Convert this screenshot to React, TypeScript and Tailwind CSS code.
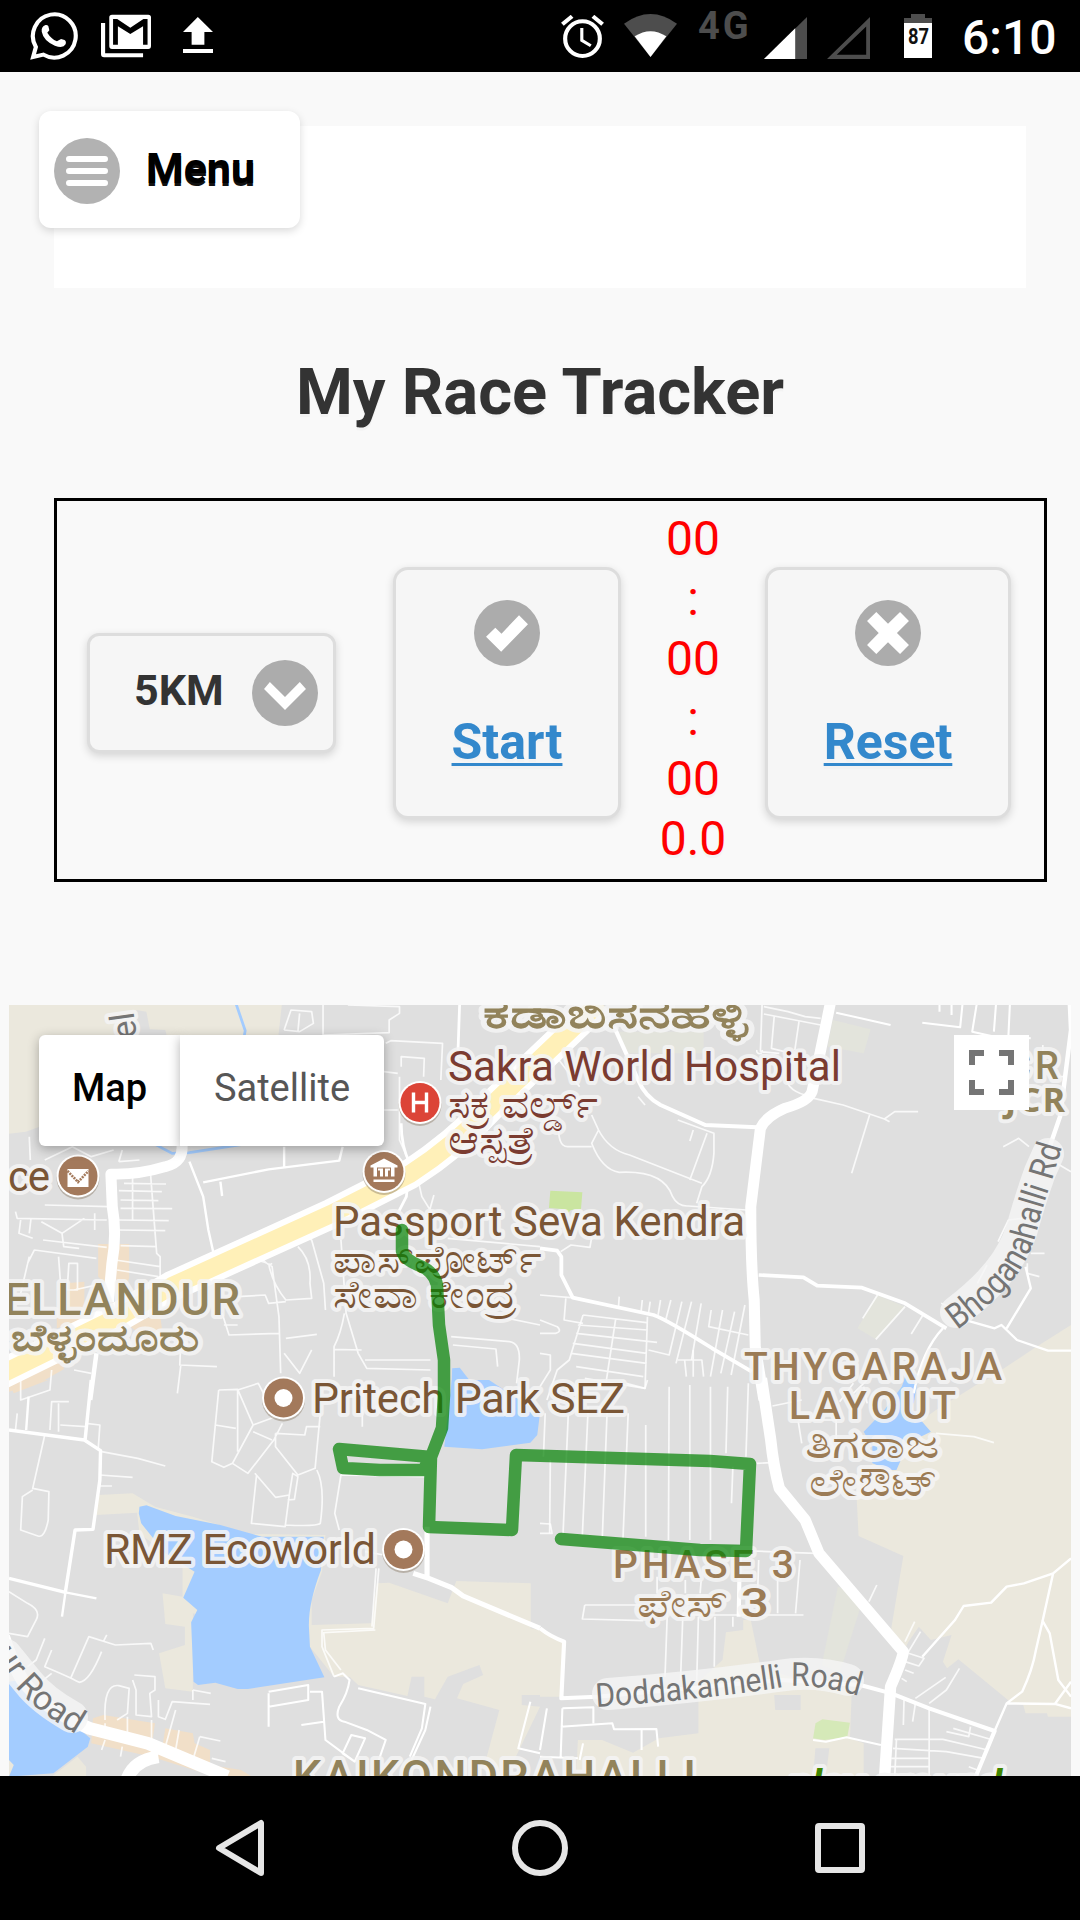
import React from "react";

const CHECK = "M35 110 L62 83 L80 101 L131 46 L157 73 L79 155 Z";
const CHEVRON = "M35 87 L52 66 L96 111 L139 66 L157 87 L96 150 Z";
const CROSS = "M35 63 L62 36 L96 71 L131 36 L157 63 L122 99 L157 135 L131 162 L96 127 L62 162 L35 135 L69 99 Z";

function RoundIcon({ d, fill = "#acacac" }: { d: string; fill?: string }) {
  return (
    <svg className="block h-[66px] w-[66px] shrink-0" viewBox="0 0 192 198" preserveAspectRatio="none">
      <ellipse cx="96" cy="99" rx="96" ry="99" fill={fill} />
      <path d={d} fill="#fff" />
    </svg>
  );
}

function StatusBar() {
  return (
    <header className="flex h-[72px] shrink-0 items-start bg-black">
      <svg className="mt-3 ml-[30px] h-12 w-[48px]" viewBox="88 36 139 144" preserveAspectRatio="none">
        <path d="M97 171 L105 141 A 62 65 0 1 1 127 164 Z" fill="none" stroke="#fff" strokeWidth="12" />
        <path
          d="M133 75 Q120 80 122 95 Q127 122 160 137 Q184 146 191 133 Q194 124 188 120 L178 117 L166 124 Q149 116 138 98 L144 91 L141 78 Q138 74 133 75 Z"
          fill="#fff"
        />
      </svg>
      <svg className="mt-[14px] ml-[23px] h-[44px] w-[50px]" viewBox="293 42 145 132" preserveAspectRatio="none">
        <path
          fillRule="evenodd"
          d="M325 44 H430 Q438 44 438 52 V138 Q438 147 430 147 H325 Q317 147 317 138 V52 Q317 44 325 44 Z M328 57 V134 H342 V79 L378 102 L415 79 V134 H428 V57 H416 L378 83 L340 57 Z"
          fill="#fff"
        />
        <path d="M293 69 H305 V160 H415 V172 H302 Q293 172 293 162 Z" fill="#fff" />
      </svg>
      <svg className="mt-[17px] ml-[32px] h-9 w-[30px]" viewBox="531 51 87 108" preserveAspectRatio="none">
        <path d="M574 51 L618 96 H593 V134 H556 V96 H531 Z M531 147 H618 V159 H531 Z" fill="#fff" />
      </svg>

      <svg className="mt-[15px] ml-[348px] h-[43px] w-[43px]" viewBox="62 45 124 129" preserveAspectRatio="none">
        <ellipse cx="124" cy="116" rx="50" ry="52" fill="none" stroke="#fff" strokeWidth="12" />
        <path d="M66 73 L94 49 M182 73 L154 49" stroke="#fff" strokeWidth="12" />
        <path d="M122 84 V121 L148 137" fill="none" stroke="#fff" strokeWidth="9" />
      </svg>
      <svg className="mt-[14px] ml-[20px] h-[43px] w-[53px]" viewBox="244 42 154 129" preserveAspectRatio="none">
        <path d="M321 171 L244 71 Q321 13 398 71 Z" fill="#4d4d4d" />
        <path d="M321 171 L275 109 Q321 78 367 109 Z" fill="#fff" />
      </svg>
      <div className="mt-[5px] ml-[21px] w-[50px] text-[38px] leading-[43px] font-bold tracking-[3px] text-[#4d4d4d]">4G</div>
      <svg className="mt-[17px] ml-[16px] h-[42px] w-[43px]" viewBox="648 50 124 127" preserveAspectRatio="none">
        <path d="M648 177 L772 50 V177 Z" fill="#4d4d4d" />
        <path d="M648 177 L738 84 V177 Z" fill="#fff" />
      </svg>
      <svg className="mt-[17px] ml-[20px] h-[42px] w-[43px]" viewBox="831 50 124 127" preserveAspectRatio="none">
        <path fillRule="evenodd" d="M831 177 L955 50 V177 Z M859 164 H944 V79 Z" fill="#4d4d4d" />
      </svg>
      <svg className="mt-[14px] ml-[34px] h-[44px] w-[28px]" viewBox="0 0 28 44">
        <path d="M0 4 H7 V0 H21 V4 H28 V10 H0 Z" fill="#4d4d4d" />
        <path d="M0 9 H28 V44 H0 Z" fill="#fff" />
        <text x="4" y="30" fontSize="21.5" fontWeight="700" textLength="21" lengthAdjust="spacingAndGlyphs" fill="#111">
          87
        </text>
      </svg>
      <div className="mt-[10px] ml-[30px] text-[48px] leading-[56px] font-medium whitespace-nowrap text-white">6:10</div>
    </header>
  );
}

type Label = {
  t: string;
  x: number;
  y: number;
  w: number;
  s: number;
  c: string;
  weight?: number;
  glyphs?: boolean;
};

const POI = "#7a5636";
const AREA = "#92835b";
const SUB = "#9b7b55";
const MED = "#7b3c31";

const LABELS: Label[] = [
  { t: "ಕಡಾಬಿಸನಹಳ್ಳಿ", x: 483, y: 1028, w: 265, s: 40, c: AREA, weight: 600, glyphs: true },
  { t: "Sakra World Hospital", x: 448, y: 1081, w: 393, s: 42, c: MED },
  { t: "ಸಕ್ರ ವರ್ಲ್ಡ್", x: 448, y: 1118, w: 150, s: 40, c: MED, weight: 500, glyphs: true },
  { t: "ಆಸ್ಪತ್ರೆ", x: 448, y: 1154, w: 88, s: 40, c: MED, weight: 500, glyphs: true },
  { t: "ce", x: 8, y: 1191, w: 42, s: 42, c: POI },
  { t: "Passport Seva Kendra", x: 333, y: 1236, w: 412, s: 42, c: POI },
  { t: "ಪಾಸ್‌ಪೋರ್ಟ್", x: 333, y: 1273, w: 209, s: 40, c: POI, weight: 500, glyphs: true },
  { t: "ಸೇವಾ ಕೇಂದ್ರ", x: 333, y: 1308, w: 184, s: 40, c: POI, weight: 500, glyphs: true },
  { t: "ELLANDUR", x: 4, y: 1315, w: 236, s: 45, c: AREA, weight: 500 },
  { t: "ಬೆಳ್ಳಂದೂರು", x: 11, y: 1351, w: 188, s: 38, c: AREA, weight: 700, glyphs: true },
  { t: "JCR", x: 981, y: 1079, w: 78, s: 38, c: AREA, weight: 500 },
  { t: "THYGARAJA", x: 744, y: 1380, w: 258, s: 39, c: SUB, weight: 500 },
  { t: "LAYOUT", x: 789, y: 1419, w: 167, s: 39, c: SUB, weight: 500 },
  { t: "ತಿಗರಾಜ", x: 805, y: 1458, w: 135, s: 40, c: SUB, weight: 500, glyphs: true },
  { t: "ಲೇಔಟ್", x: 809, y: 1496, w: 129, s: 40, c: SUB, weight: 500, glyphs: true },
  { t: "Pritech Park SEZ", x: 312, y: 1413, w: 313, s: 43, c: POI },
  { t: "RMZ Ecoworld", x: 104, y: 1564, w: 272, s: 43, c: POI },
  { t: "PHASE 3", x: 613, y: 1578, w: 181, s: 39, c: SUB, weight: 500 },
  { t: "ಫೇಸ್ 3", x: 637, y: 1617, w: 132, s: 40, c: SUB, weight: 500, glyphs: true },
  { t: "KAIKONDRAHALLI", x: 293, y: 1792, w: 403, s: 45, c: AREA, weight: 500 },
];

// Each tile has its own fine grid (1568 x 1200 units over 540 x 400 px).
function Tile({ x, y, children }: { x: number; y: number; children: React.ReactNode }) {
  return <g transform={`translate(${x} ${y}) scale(0.34439 0.33333)`}>{children}</g>;
}

function Road({ d, w = 5 }: { d: string; w?: number }) {
  return <path d={d} fill="none" stroke="#fff" strokeOpacity={w < 6 ? 0.8 : 1} strokeWidth={w} strokeLinejoin="round" />;
}

function Pin({ x, y, color = "#a3795b", children }: { x: number; y: number; color?: string; children?: React.ReactNode }) {
  return (
    <g transform={`translate(${x} ${y})`}>
      <circle cy="2" r="21.5" fill="#8a7a66" fillOpacity="0.45" />
      <circle r="21.5" fill="#fff" />
      <circle r="19.5" fill={color} />
      {children ?? <circle r="9" fill="#fff" />}
    </g>
  );
}

const BEIGE = "#ebe8dd";
const WATER = "#a3ccff";
const ORANGE = "#f1dfc8";

function MapCanvas() {
  return (
    <svg className="block h-[771px] w-[1062px]" viewBox="9 1005 1062 771">
      <rect x="9" y="1005" width="1062" height="771" fill="#dfdfdf" />

      <Tile x={0} y={1000}>
        <path d="M0 0 H820 L808 110 H485 L480 90 L435 88 L425 35 L395 30 L390 110 H115 V380 L75 395 L0 405 Z" fill={BEIGE} />
        <path d="M685 10 L712 92 L708 115 M445 430 L500 460 L550 458 L700 434" fill="none" stroke={WATER} strokeWidth="8" />
        <path
          d="M285 732 H375 V835 L350 890 L285 830 Z M190 850 L245 845 V960 L165 985 V950 L185 900 Z M385 965 L465 945 L470 985 L430 1025 L380 980 Z M26 1140 L185 1075 V1108 L130 1140 L26 1175 Z"
          fill={ORANGE}
        />
        <path d="M1310 1200 L1313 1105 L1335 1103 L1370 1150 L1400 1200 Z" fill={WATER} />
      </Tile>
      <Tile x={540} y={1000}>
        <path d="M230 95 H475 V160 H250 Z M850 60 L960 88 L940 160 L835 140 Z M978 885 L1060 920 L975 1018 L922 985 Z" fill="#e3e4dc" />
        <path d="M30 572 L123 577 L119 628 L90 630 L82 638 L72 628 L26 624 Z" fill="#cae5a0" />
        <path d="M1542 975 L1435 1045 L1195 1210 H1542 Z" fill={BEIGE} />
        <path d="M1065 1115 L1100 1125 L1085 1210 H1035 Z" fill={WATER} />
      </Tile>
      <Tile x={0} y={1380}>
        <path d="M26 10 L140 0 L40 40 Z" fill={ORANGE} />
        <path
          d="M285 345 L385 340 L450 380 L560 410 L720 462 L945 465 L935 575 L905 660 L905 735 L1078 730 L1095 610 L1130 608 L1300 670 L1325 603 L1541 610 V745 L1568 750 V945 L1515 945 V975 L1568 980 L1470 1190 L1403 1170 L1450 990 L1327 955 L1345 912 L1403 885 L1392 855 L1300 890 L1263 958 L1232 950 V890 H1195 L1183 948 L1040 915 L1015 890 L970 890 L900 800 L560 700 V935 L480 925 L462 820 L537 795 V740 L480 732 L472 640 L530 650 L530 560 L405 460 L398 398 L278 405 Z"
          fill={BEIGE}
        />
        <path
          d="M405 380 L425 376 L510 408 L640 435 L760 470 L940 470 L932 570 Q895 670 897 740 L900 800 L942 892 L720 927 L690 927 L625 908 L575 915 L562 905 L555 727 L573 690 L532 653 L565 575 L480 520 L410 430 L403 400 Z"
          fill={WATER}
        />
        <path d="M1290 200 L1312 0 H1420 L1568 100 L1560 165 L1540 188 L1400 208 Z" fill={WATER} />
        <path d="M26 905 L60 900 L262 1075 L255 1100 L155 1180 L26 1190 Z" fill={WATER} />
        <path d="M26 1140 L40 1155 L26 1190 Z M225 1130 L250 1160 L250 1190 H150 Z" fill={BEIGE} />
        <path
          d="M270 1015 L300 1005 L450 1030 L440 1100 L470 1110 L480 1045 L560 1060 L565 1090 L610 1110 V1155 L700 1170 L740 1195 H640 L440 1130 L265 1090 Z"
          fill={ORANGE}
        />
      </Tile>
      <Tile x={540} y={1380}>
        <path d="M1290 0 H1542 V1010 H1475 L1472 1000 H1410 L1403 975 L1365 965 L1215 838 L1182 865 L1170 845 L1195 765 L1135 780 L1100 740 L1070 785 L1055 815 L1020 745 L1055 528 L925 468 L918 320 L1000 200 L1150 90 Z" fill={BEIGE} />
        <path d="M0 745 L68 785 L60 950 H0 Z" fill={BEIGE} />
        <path
          d="M590 720 L612 720 L640 860 L740 895 L905 940 L900 1075 L940 1090 V1190 H830 L840 1105 L745 1105 L680 1080 L720 1075 L790 1085 L800 1100 L793 1190 H105 L110 1080 L180 1080 L270 1118 L345 1075 L460 1060 V905 L530 840 L540 757 L590 750 Z"
          fill={BEIGE}
        />
        <path d="M680 945 H757 V990 H683 Z" fill="#dfdfdf" />
        <path d="M865 620 L940 650 L870 880 L818 855 Z" fill="#e3e4dc" />
        <path d="M820 1018 L900 1028 L892 1072 L825 1080 L793 1075 L800 1030 Z" fill="#d5e9b8" />
        <path d="M1065 0 H1090 L1080 90 L1135 155 L1045 200 L1050 235 L1035 270 H1015 L965 250 L965 200 L940 155 L1000 90 Z" fill={WATER} />
      </Tile>

      <Tile x={0} y={1000}>
        <Road
          d="M825 90 L845 30 L905 35 L910 70 L870 95 L825 90 M870 40 L865 95 M938 0 V105 L1130 98 L1130 60 L1160 40 V20 L1010 15 M1120 130 L1135 122 L1285 130 L1280 240 M1165 200 V170 L1232 175 L1230 230 M1115 215 L1155 220"
        />
        <Road d="M1335 0 L1330 150 M1165 370 Q1165 440 1190 490 L1180 590 L1155 640" w={8} />
        <Road d="M1155 330 H1115 M1160 230 V420 L1190 490 M1215 545 L1225 590 L1255 640 M1260 585 L1245 640" />
        <Road d="M550 485 L590 590 L605 690 L620 760 M590 547 L780 508 L985 482 L995 440 M825 440 V500 M640 545 L645 588" w={7} />
        <Road d="M85 410 L88 480 M130 480 L210 440 L265 470 L330 450 M345 485 L355 450 M345 485 L405 480" />
        <Road d="M360 550 L482 552 M345 572 L470 575 M350 600 L460 602 M350 625 L500 626 M345 660 L490 662 M345 690 L480 692 M350 737 L455 740 M335 780 L465 800 M340 810 L460 830 M385 530 V660 M437 520 L455 760 L465 770 V850" />
        <Road d="M130 615 L315 620 M45 635 L50 655 L310 660 M90 655 L85 700 M60 660 L55 700 L95 715 M120 665 L180 700 L245 655 M180 700 L185 740 L230 745 M125 720 L310 742 M80 790 L100 750 L280 775 M85 770 L60 880 M170 770 L175 840 M200 790 H225 V870 H195 Z M215 870 L300 850 M275 640 V690" />
        <Road d="M765 780 Q780 800 790 790 M720 780 Q770 780 790 800 L810 950 L815 1120 M780 790 Q790 850 830 900 L905 895 L900 850 Q905 780 865 740 M870 700 L905 720 L940 850 L945 930 M690 890 L770 885 L780 910 L830 905 M645 940 L665 1005 L810 1000 M650 975 H690 M830 1015 L920 1003 M825 1060 L870 1120 L905 1050" />
        <Road d="M990 720 L1005 940 L1040 1060 L1065 1105 L1250 1110 M1000 940 Q990 1000 970 1040 V1130 M970 1048 L1050 1050 M1250 1080 H1060 M1315 1035 L1440 1047 L1445 1100 M1310 1010 L1480 1025 Q1510 1030 1508 1080 L1500 1150 M1450 950 L1568 975 M1300 715 L1568 740" />
        <Road d="M280 1060 L262 1200" w={13} />
        <Road d="M525 1030 L522 1095 L630 1100 M525 1095 L515 1180 M265 1120 L215 1110 M60 1140 V1200 L145 1170 L150 1110" />
        <Road d="M528 430 Q535 488 480 500 Q400 525 322 522 L326 620 Q340 700 325 790 L315 905" w={32} />
      </Tile>
      <Tile x={540} y={1000}>
        <Road d="M215 80 L285 240 Q305 290 350 315 L480 375 L630 382" w={12} />
        <Road d="M645 10 L640 155 M680 50 L672 145 L710 155 M650 20 L720 35 L770 50 L815 55 M650 42 L740 60 L815 75 M752 65 L740 150 M630 150 A8 8 0 1 0 645 150 M640 155 L695 160" />
        <Road d="M860 38 L1018 75 M1110 68 L1220 82 L1228 0 M1160 0 V35 M1195 0 V45 M1270 0 L1255 95 L1340 115 M1325 0 L1318 95 M1365 0 L1360 110 L1425 115" w={6} />
        <Road d="M795 295 L880 315 L1000 357 L1015 365 M1000 357 L1030 335 H1098 M957 345 L905 520 M715 230 Q715 275 790 290" />
        <Road d="M55 180 L115 260 M150 345 L170 390 Q200 450 260 465 L470 550 M170 390 L150 430 Q180 510 230 517 Q360 510 385 590 Q400 620 430 618 L600 630 M55 370 Q50 440 80 440 H150 M400 360 L505 400 V460 Q500 530 470 560 L455 610 M485 400 L435 540 M445 390 L435 423 M285 290 L305 315" />
        <Road d="M0 745 L50 752 L62 770 V825 L95 893 L330 945 Q370 960 500 1045 L615 1115" w={11} />
        <Road d="M60 755 L90 735 L145 742 L150 712 M0 885 L90 893 M75 895 L70 960 L125 970 M230 890 L228 920 M297 900 L293 940 M320 905 L315 940 M350 900 L343 945 M380 900 L365 960 M412 905 L375 1065 L315 1050 M440 905 L395 1090 M468 910 L440 1080 M497 930 L490 980 L605 1005 M530 930 L495 1130 M565 935 L525 1120 M595 915 L555 1125" />
        <Road d="M125 945 L310 968 M125 945 L85 1080 L50 1110 L20 1200 M110 975 L312 990 M105 1000 L340 1027 M95 1030 L310 1060 M90 1060 L310 1090 M105 1100 L300 1130 M220 955 L190 1160 M312 950 L305 1165 L130 1135 M0 960 L50 980 Q65 995 45 1000 L0 1000 M0 1060 L30 1065 V1110 L0 1160 M400 1080 H470 L475 1130 M445 1050 V1130 M420 1080 L425 1130" />
        <Road d="M635 825 L765 832 L805 857 L935 863 L1060 910 L1180 985" w={11} />
        <Road d="M980 885 L937 955 M1060 920 L975 1018 M1112 945 L1078 1002 M1345 440 L1390 415 L1420 440 M1330 725 L1360 660 L1400 655 M1298 795 L1270 850 M1425 760 H1465 M1415 790 V820 L1450 830 M1500 490 L1542 515 M1165 910 L1210 930 M1460 135 V165 M1505 230 H1530" />
        <Road d="M1170 985 Q1110 1050 1085 1180 M1200 950 L1320 985 L1340 975 L1385 1020 L1475 1052 H1542 M1355 985 L1425 865 L1410 800" w={7} />
        <Road d="M1538 0 L1542 90 L1510 350 L1480 440" w={13} />
        <Road d="M845 0 L790 275 Q780 305 710 325 Q655 350 640 385 L612 620 Q612 800 622 900 L625 1040 L650 1200" w={32} />
      </Tile>
      <Tile x={0} y={1380}>
        <Road d="M26 150 L245 180 L292 212 L290 300 L270 448 L218 450 L190 635 M265 0 L247 180 M26 595 L190 637" w={10} />
        <Road d="M83 50 L76 150 M190 637 L280 655 M190 637 L180 710" w={7} />
        <Road d="M295 215 L400 235 L480 258 M290 285 L385 292 M285 318 H325 M130 165 L95 325 L142 335 L140 420 Q130 475 110 468 L60 450 L65 350 L95 330 M250 130 L290 135 L285 210 M145 150 L150 65 H200 M170 70 V155 M175 135 L250 140 M45 150 L50 100 M26 635 L80 670 Q120 690 105 720 L80 770 L26 760" />
        <Road d="M635 30 L690 28 L735 135 L675 250 L720 280 L795 180 L820 130 M635 30 L615 245 L650 262 L675 250 M625 135 L685 145 M690 28 V215 M690 30 L750 10 L770 50 M735 135 L800 110 M735 155 L790 180 M800 160 V200 L865 285 L915 265 L930 100 M800 160 L885 165 L890 140 H930 M740 280 L800 352 L840 345 L850 280 L865 290 L855 358 L835 360 M745 285 L730 430 L828 440 L840 345 M920 270 Q945 320 930 430 Q920 440 828 435" />
        <Road d="M1235 290 L990 285 L972 400 L985 450 M1060 515 L1115 525 M1100 565 L1085 745 L935 750 V800 L970 890 M1092 565 L1080 740 M1090 750 L940 758 L945 810 L990 870 M1052 80 V140" />
        <Road d="M970 890 L995 880 L1015 900 Q1010 940 985 980 Q970 1020 1000 1025 L1065 1050 L1120 1080 L1100 1140 M1040 925 L1235 972 L1225 1045 L1190 1130 M1250 980 L1235 1050 L1195 1140 M780 935 L895 915 V960 L780 980 M780 940 V1040 M900 935 H935 L945 1080 L1030 1145 M875 1035 L940 1025 M1020 1065 L1060 1075 L1030 1145 L995 1120 Z M1540 965 L1505 1105 L1568 1120" w={6} />
        <Road d="M150 810 L130 860 Q200 890 230 907 Q260 905 295 815 M205 895 L258 770 L335 795 L438 790 L445 810 M310 765 L300 785 M130 775 L105 840 L80 860 M150 880 L120 905 M390 885 L450 890 V930 L435 940 L440 1010 L395 1005 V930 L385 900 M305 1020 Q300 910 345 917 L375 925 L370 1000 L340 1020 M460 960 V1010 L480 1018 L500 965 L610 973 M560 930 L612 940 M560 930 V960 M510 990 L480 1100 M520 1050 L510 1110 M580 1070 L640 1083 M580 1070 L560 1140 M615 1135 L655 1145 M370 1010 V1060 M440 1020 V1080 M305 1030 V1070 M295 1110 L305 1080 M350 1130 L355 1100" />
        <Road d="M1200 580 L1245 595 L1310 622 L1345 648 L1568 745 M1240 590 V440" w={15} />
        <Road d="M10 770 Q35 850 65 900 Q130 990 260 1045 L430 1090 L660 1190 M460 1130 Q390 1140 370 1195" w={38} />
      </Tile>
      <Tile x={540} y={1380}>
        <Road d="M82 105 L67 460 M140 80 L123 465 M195 90 L181 470 M256 100 L241 475 M307 135 V470 M375 20 L373 480 M435 15 V480 M495 20 V480 M545 20 L540 220 M605 10 L598 230 M560 260 L556 370 M15 100 L10 230 M30 240 L28 460 M250 10 L305 25 L312 0" />
        <Road d="M615 513 L800 520 M630 250 L670 248 M675 78 L760 60 M750 120 H860 V180 M750 125 L760 190 M870 65 L910 10 M910 40 L950 0 M940 20 L950 70 M0 430 L30 432 L35 460 L0 460 M130 675 H290 M130 675 L123 717 L300 722 M370 690 L363 890 M415 700 L408 900 M460 710 L455 905 M508 710 L506 860 M560 710 V740 M400 705 H765 M635 540 L630 700 M690 560 V700 M755 540 L742 700 M340 590 V640 M422 600 V640 M468 600 L465 640" />
        <Road d="M580 530 L577 710 M0 745 Q30 770 70 785 L62 955 L165 950 L700 900 L930 915 L1020 940 L1130 985 L1320 1053 L1265 1190" w={12} />
        <Road d="M1320 1053 L1355 970 L1400 935 Q1430 870 1440 810 L1460 720 L1490 580 L1542 535 M1490 580 L1405 610 L1355 620 L1310 668 L1230 678 L1205 720 L1110 830 M1458 720 L1480 760 L1505 900 L1542 950 M1355 970 L1495 972 L1542 905 M1495 972 L1542 985" w={7} />
        <Road d="M955 665 L978 615 M1070 815 L1105 755 M1070 820 L1115 835 L1100 858 L1060 845 M1060 785 L1088 725 M1060 870 L1085 880 M1050 895 L1065 905 M1090 955 L1178 892 M1130 970 L1180 930 L1218 865 M1057 960 L1055 1035 M1090 970 L1082 1025 M1130 985 V1190 M1250 1040 L1245 1070 L1180 1055 M1200 1045 L1315 1080 M1030 1078 L1170 1078 L1300 1110 M1025 1105 L1180 1115 L1290 1135 M1020 1135 H1130 M1015 1160 H1130 M1035 1080 L1030 1190 M1245 1160 L1270 1170 M1150 160 L1260 170 L1318 188" />
        <Road d="M65 985 L155 982 V1030 M65 985 L60 1130 M60 1040 L210 1030 L215 1048 L338 1047 L343 1100 M295 1050 V1110 M20 985 L0 1110 M125 1090 L115 1140 M0 1130 L110 1135 M793 1080 L830 1085 L890 1072 L990 1095" w={6} />
        <Road d="M643 -5 L670 180 Q678 260 695 325 L770 420 L810 520 L1055 815 Q1052 840 1018 920 L1000 1200" w={33} />
      </Tile>

      <g fill="none" strokeLinejoin="round">
        <path d="M0 1375 L120 1316 L172 1286 L331 1214 L410 1174 Q455 1145 489 1108 L540 1059 L600 1002" stroke="#fff" strokeWidth="30" />
        <path d="M0 1375 L120 1316 L172 1286 L331 1214 L410 1174 Q455 1145 489 1108 L540 1059 L600 1002" stroke="#fff0b8" strokeWidth="18" />
      </g>

      <Pin x={420} y={1102.5} color="#dc4437">
        <path d="M-6.5 -10 V10 M6.5 -10 V10 M-6.5 0 H6.5" stroke="#fff" strokeWidth="3.4" />
      </Pin>
      <Pin x={78} y={1176}>
        <path d="M-10.500 -7 H10.500 V11 H-10.500 Z" fill="#fff" />
        <path d="M-10.500 -5 L0 6 L10.500 -5" fill="none" stroke="#a3795b" strokeWidth="2.600" strokeDasharray="2 1" />
      </Pin>
      <Pin x={384} y={1171.500}>
        <path d="M-13.500 -6 L0 -13 L13.500 -6 V-4 H-13.500 Z M-10.500 -4 H-7 V5 H-10.500 Z M7 -4 H10.500 V5 H7 Z M-6 -3 H-1 V5 H-4 V-1 H-6 Z M1 -3 H6 V-1 H4 V5 H1 Z M-10.500 8 H10.500 V10.500 H-10.500 Z" fill="#fff" />
      </Pin>
      <Pin x={283.5} y={1398} />
      <Pin x={403.5} y={1549.5} />

      <g stroke="#f5f5f5" strokeOpacity="0.85" strokeWidth="8" strokeLinejoin="round" className="[paint-order:stroke]">
        {LABELS.map((l) => (
          <text
            key={l.t}
            x={l.x}
            y={l.y}
            fontSize={l.s}
            fontWeight={l.weight ?? 400}
            fill={l.c}
            textLength={l.w}
            lengthAdjust={l.glyphs ? "spacingAndGlyphs" : "spacing"}
          >
            {l.t}
          </text>
        ))}
        <text x="1005" y="1112" fontSize="34" fontWeight="700" fill={AREA} textLength="60" className="font-['Noto_Sans']">
          JCR
        </text>
        <text x="788" y="1801" fontSize="44" fontWeight="600" fontStyle="italic" fill="#3f8500" textLength="214">
          play ground
        </text>
      </g>

      <g fill="none" stroke="#f5f5f5" strokeOpacity="0.8" strokeWidth="32" strokeLinecap="round" strokeLinejoin="round">
        <path d="M956 1312 Q990 1286 1006 1262 Q1020 1240 1024 1222 Q1030 1200 1040 1172 L1048 1154" />
        <path d="M608 1694 Q690 1688 778 1676 Q815 1670 848 1680" />
        <path d="M6 1655 L28 1682 Q42 1700 72 1717" />
      </g>
      <g fill="#757575">
        <path id="bhoganahalli" d="M957 1330 Q1000 1299 1018 1273 Q1031 1254 1037 1230 Q1043 1205 1053 1177 L1070 1120" fill="none" />
        <text fontSize="35">
          <textPath href="#bhoganahalli" textLength="218" lengthAdjust="spacingAndGlyphs">
            Bhoganahalli Rd
          </textPath>
        </text>
        <path id="doddakannelli" d="M596 1707 Q690 1701 778 1688 Q815 1680 880 1703" fill="none" />
        <text fontSize="33">
          <textPath href="#doddakannelli" textLength="265" lengthAdjust="spacingAndGlyphs">
            Doddakannelli Road
          </textPath>
        </text>
        <path id="road" d="M-16 1640 L15 1686 Q36 1713 92 1743" fill="none" />
        <text fontSize="34">
          <textPath href="#road" startOffset="17">
            ur Road
          </textPath>
        </text>
        <text
          fontSize="34"
          transform="translate(140 1058) rotate(-98)"
          stroke="#f5f5f5"
          strokeOpacity="0.85"
          strokeWidth="8"
          strokeLinejoin="round"
          className="[paint-order:stroke]"
        >
          Bel
        </text>
      </g>

      <path
        d="M402 1230 V1251 Q404 1259 418 1265 Q434 1271 437 1285 L439 1325 L444 1360 V1395 L442 1428 L431 1457 L339 1449 L343 1468 L380 1470 H424 L429 1457 L431 1457 L429 1527 L512 1530 L516 1455 L710 1461 L750 1464 L746 1551 L700 1550 L561 1539"
        fill="none"
        stroke="#008000"
        strokeOpacity="0.7"
        strokeWidth="12.5"
        strokeLinejoin="round"
        strokeLinecap="round"
      />
    </svg>
  );
}

const CARD =
  "flex shrink-0 border-[3px] border-[#ddd] bg-[#f6f6f6] font-bold shadow-[0_3px_9px_rgba(0,0,0,0.15)] [text-shadow:0_3px_0_#f3f3f3]";

export default function App() {
  return (
    <div className="flex h-[1920px] w-[1080px] flex-col overflow-hidden bg-[#f9f9f9] font-[Roboto,sans-serif] text-[#333]">
      <StatusBar />

      <div className="relative mt-[54px] ml-[54px] h-[162px] w-[972px] shrink-0 bg-white">
        <button className="absolute -top-[15px] -left-[15px] flex h-[117px] w-[261px] items-center rounded-[12px] bg-white pt-[2px] pl-[15px] shadow-[0_3px_9px_rgba(0,0,0,0.15)]">
          <svg className="h-[66px] w-[66px]" viewBox="0 0 66 66">
            <circle cx="33" cy="33" r="33" fill="#b2b2b2" />
            <path d="M15 21 H51 M15 33 H51 M15 45 H51" stroke="#fff" strokeWidth="6" strokeLinecap="round" />
          </svg>
          <span className="-mt-1 ml-[26px] text-[43px] font-bold text-black [text-shadow:0_3px_0_#111]">Menu</span>
        </button>
      </div>

      <h1 className="mt-[67px] h-[143px] shrink-0 text-center text-[65px] leading-[75px] font-bold [text-shadow:0_3px_0_#f3f3f3]">
        My Race Tracker
      </h1>

      <section className="ml-[54px] flex h-[384px] w-[993px] shrink-0 items-center border-[3px] border-black pl-[30px]">
        <button className={`${CARD} mt-[6px] h-[120px] w-[249px] items-center rounded-[12px] pr-[15px] pl-[44px] text-[43px]`}>
          <span className="-mt-[6px] flex-1 text-left">5KM</span>
          <RoundIcon d={CHEVRON} />
        </button>
        <button className={`${CARD} mt-[6px] ml-[57px] h-[252px] w-[228px] flex-col items-center rounded-[15px] pt-[30px]`}>
          <RoundIcon d={CHECK} />
          <a className="mt-[46px] text-[50px] leading-[60px] text-[#38c] underline decoration-[3px] underline-offset-[4px]">Start</a>
        </button>
        <div className="-mt-[2px] w-[144px] text-center text-[48px] leading-[60px] text-[#f00] [text-shadow:0_3px_0_#f3f3f3]">
          <p>00</p>
          <p>:</p>
          <p>00</p>
          <p>:</p>
          <p>00</p>
          <p>0.0</p>
        </div>
        <button className={`${CARD} mt-[6px] h-[252px] w-[246px] flex-col items-center rounded-[15px] pt-[30px]`}>
          <RoundIcon d={CROSS} />
          <a className="mt-[46px] text-[50px] leading-[60px] text-[#38c] underline decoration-[3px] underline-offset-[4px]">Reset</a>
        </button>
      </section>

      <main className="relative mt-[123px] ml-[9px] h-[771px] w-[1062px] shrink-0 overflow-hidden">
        <MapCanvas />
        <div className="absolute top-[30px] left-[30px] flex h-[111px] text-[38px] [text-shadow:0_3px_0_#f3f3f3]">
          <button className="flex w-[141px] items-center justify-center rounded-l-[6px] bg-white pb-[5px] font-medium text-black shadow-[0_3px_12px_rgba(0,0,0,0.3)]">
            Map
          </button>
          <button className="flex w-[204px] items-center justify-center rounded-r-[6px] bg-white pb-[5px] text-[#565656] shadow-[0_3px_12px_rgba(0,0,0,0.3)]">
            Satellite
          </button>
        </div>
        <button className="absolute top-[30px] right-[42px] flex h-[75px] w-[75px] items-center justify-center bg-white">
          <svg className="h-[45px] w-[45px]" viewBox="0 0 45 45">
            <path d="M3 15 V3 H15 M30 3 H42 V15 M42 30 V42 H30 M15 42 H3 V30" fill="none" stroke="#757575" strokeWidth="6" />
          </svg>
        </button>
      </main>

      <nav className="flex h-[144px] shrink-0 items-center justify-between bg-black pr-[215px] pl-[215px]">
        <svg className="h-[58px] w-[50px]" viewBox="0 0 50 58">
          <path d="M46 4 V54 L4 29 Z" fill="none" stroke="#e6e6e6" strokeWidth="6" strokeLinejoin="round" />
        </svg>
        <svg className="h-[56px] w-[56px]" viewBox="0 0 56 56">
          <circle cx="28" cy="28" r="25" fill="none" stroke="#e6e6e6" strokeWidth="6" />
        </svg>
        <svg className="h-[50px] w-[50px]" viewBox="0 0 50 50">
          <rect x="3" y="3" width="44" height="44" rx="1" fill="none" stroke="#e6e6e6" strokeWidth="6" />
        </svg>
      </nav>
    </div>
  );
}
